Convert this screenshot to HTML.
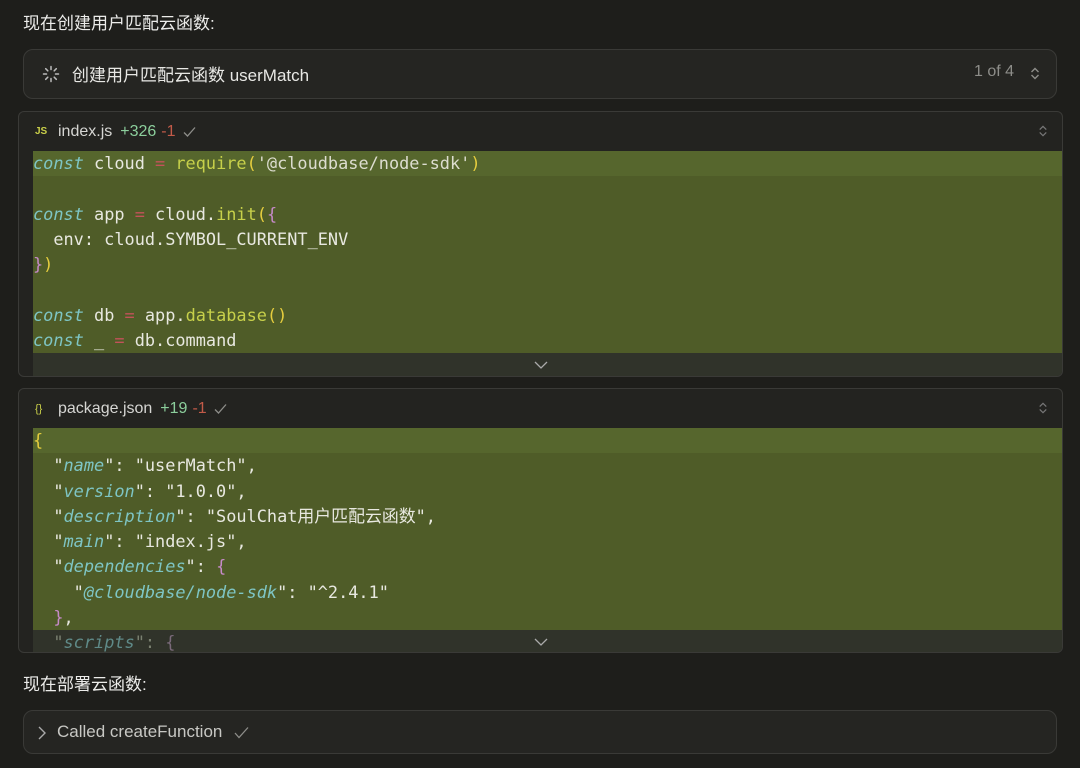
<!DOCTYPE html>
<html><head><meta charset="utf-8"><style>
*{box-sizing:border-box;margin:0;padding:0}
body{width:1080px;height:768px;background:#1e1e1b;color:#e6e6e3;font-family:"Liberation Sans","Noto Sans CJK SC",sans-serif;position:relative;overflow:hidden}
.t{position:absolute;left:23px;font-size:17px;color:#ececea}
.box{position:absolute;left:23px;width:1034px;border:1px solid #3a3a37;border-radius:10px;background:#252522}
.panel{position:absolute;left:18px;width:1045px;border:1px solid #3a3a37;border-radius:6px;background:#232320;overflow:hidden}
.hdr{height:39px;display:flex;align-items:center;padding-left:16px;font-size:16px;color:#d6d6d3}
.ic{display:inline-block;width:23px}
.code{position:absolute;left:14px;right:0;background:#4f5c28;font-family:"DejaVu Sans Mono","Liberation Mono","Noto Sans CJK SC",monospace;font-size:16.9px;color:#e8e8e0}
.ln{height:25.3px;line-height:25.3px;white-space:pre}
.first{background:#56662d}
.strip{position:absolute;left:14px;right:0;background:#30332a}
.k{color:#7ec5c4;font-style:italic}
.o{color:#c3525a}
.f{color:#c7d04a}
.p{color:#e5cd3e}
.pp{color:#c68ac8}
.s{color:#ddddd0}
.chev{position:absolute;right:14px;top:12px;width:10px;height:14px}
</style></head><body>
<div class="t" style="top:9px">现在创建用户匹配云函数:</div>
<div class="box" style="top:49px;height:50px">
 <svg style="position:absolute;left:18px;top:15px" width="18" height="18" viewBox="0 0 18 18" stroke="#bbb" stroke-width="1.5" stroke-linecap="round"><path d="M9 1.5v3M9 13.5v3M1.5 9h3M13.5 9h3M3.7 3.7l2.1 2.1M12.2 12.2l2.1 2.1M3.7 14.3l2.1-2.1M12.2 5.8l2.1-2.1"/></svg>
 <span style="position:absolute;left:48px;top:11px;font-size:17px;color:#e8e8e5">创建用户匹配云函数 userMatch</span>
 <span style="position:absolute;right:42px;top:13px;font-size:16px;color:#8d8d89">1 of 4</span>
 <svg style="position:absolute;right:16px;top:16px" width="10" height="15" viewBox="0 0 10 15" fill="none" stroke="#8d8d89" stroke-width="1.4"><path d="M1.5 6L5 2.5 8.5 6M1.5 9L5 12.5 8.5 9"/></svg>
</div>

<div class="panel" style="top:111px;height:266px">
 <div class="hdr"><span class="ic" style="color:#c9cf49;font-size:10px;font-weight:bold">JS</span>index.js<span style="margin-left:8px;color:#8ccf9c">+326</span><span style="margin-left:5px;color:#c25a48">-1</span><svg style="margin-left:7px" width="13" height="12" viewBox="0 0 13 12" fill="none" stroke="#8d8d89" stroke-width="1.3"><path d="M1 6.5l3.5 3.5L12 1.5"/></svg></div>
 <svg class="chev" viewBox="0 0 10 15" fill="none" stroke="#777" stroke-width="1.3"><path d="M1.5 6L5 2.5 8.5 6M1.5 9L5 12.5 8.5 9"/></svg>
 <div class="code" style="top:39px;height:202px">
<div class="ln first"><span class="k">const</span> cloud <span class="o">=</span> <span class="f">require</span><span class="p">(</span><span class="s">'@cloudbase/node-sdk'</span><span class="p">)</span></div>
<div class="ln"> </div>
<div class="ln"><span class="k">const</span> app <span class="o">=</span> cloud.<span class="f">init</span><span class="p">(</span><span class="pp">{</span></div>
<div class="ln">  env: cloud.SYMBOL_CURRENT_ENV</div>
<div class="ln"><span class="pp">}</span><span class="p">)</span></div>
<div class="ln"> </div>
<div class="ln"><span class="k">const</span> db <span class="o">=</span> app.<span class="f">database</span><span class="p">()</span></div>
<div class="ln"><span class="k">const</span> _ <span class="o">=</span> db.command</div>
 </div>
 <div class="strip" style="top:241px;height:25px"><svg style="position:absolute;left:500px;top:7px" width="16" height="10" viewBox="0 0 16 10" fill="none" stroke="#aaa" stroke-width="1.3"><path d="M2 2l6 6 6-6"/></svg></div>
</div>

<div class="panel" style="top:388px;height:265px">
 <div class="hdr"><span class="ic" style="color:#c9cf49;font-size:11px">{}</span>package.json<span style="margin-left:8px;color:#8ccf9c">+19</span><span style="margin-left:5px;color:#c25a48">-1</span><svg style="margin-left:7px" width="13" height="12" viewBox="0 0 13 12" fill="none" stroke="#8d8d89" stroke-width="1.3"><path d="M1 6.5l3.5 3.5L12 1.5"/></svg></div>
 <svg class="chev" viewBox="0 0 10 15" fill="none" stroke="#777" stroke-width="1.3"><path d="M1.5 6L5 2.5 8.5 6M1.5 9L5 12.5 8.5 9"/></svg>
 <div class="code" style="top:39px;height:202px">
<div class="ln first"><span class="p">{</span></div>
<div class="ln">  "<span class="k">name</span>": "userMatch",</div>
<div class="ln">  "<span class="k">version</span>": "1.0.0",</div>
<div class="ln">  "<span class="k">description</span>": "SoulChat用户匹配云函数",</div>
<div class="ln">  "<span class="k">main</span>": "index.js",</div>
<div class="ln">  "<span class="k">dependencies</span>": <span class="pp">{</span></div>
<div class="ln">    "<span class="k">@cloudbase/node-sdk</span>": "^2.4.1"</div>
<div class="ln">  <span class="pp">}</span>,</div>
 </div>
 <div class="strip" style="top:241px;height:24px;font-family:'DejaVu Sans Mono',monospace;font-size:16.9px;line-height:24px;white-space:pre;color:#7a8070">  "<span style="font-style:italic;color:#5f8a88">scripts</span>": <span style="color:#7a6a7a">{</span><svg style="position:absolute;left:500px;top:7px" width="16" height="10" viewBox="0 0 16 10" fill="none" stroke="#aaa" stroke-width="1.3"><path d="M2 2l6 6 6-6"/></svg></div>
</div>

<div class="t" style="top:670px">现在部署云函数:</div>
<div class="box" style="top:710px;height:44px">
 <svg style="position:absolute;left:13px;top:14px" width="10" height="16" viewBox="0 0 10 16" fill="none" stroke="#aaa" stroke-width="1.4"><path d="M2 2l6 6-6 6"/></svg>
 <span style="position:absolute;left:33px;top:11px;font-size:17px;color:#c8c8c4">Called createFunction</span>
 <svg style="position:absolute;left:210px;top:15px" width="15" height="13" viewBox="0 0 15 13" fill="none" stroke="#8d8d89" stroke-width="1.3"><path d="M1 7l4 4.5L14 1.5"/></svg>
</div>
</body></html>
